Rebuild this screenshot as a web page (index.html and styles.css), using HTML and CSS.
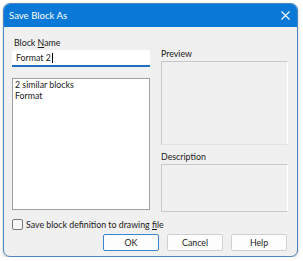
FILE: index.html
```html
<!DOCTYPE html>
<html>
<head>
<meta charset="utf-8">
<link rel="stylesheet" href="styles.css">
</head>
<body>
<div class="window">
  <div class="titlebar">
    <span class="title">Save Block As</span>
    <svg class="close" width="9" height="9" viewBox="0 0 9 9"><path d="M0.5 0.5L8.5 8.5M8.5 0.5L0.5 8.5" stroke="#fff" stroke-width="1.1" fill="none"/></svg>
  </div>
  <div class="content">
    <div class="columns">
      <div class="left">
        <div class="label">Block <u>N</u>ame</div>
        <div class="input">Format 2<span class="caret"></span></div>
        <div class="list">
          <div>2 similar blocks</div>
          <div>Format</div>
        </div>
      </div>
      <div class="right">
        <div class="label plain">Preview</div>
        <div class="box preview"></div>
        <div class="label plain desc-label">Description</div>
        <div class="box desc"></div>
      </div>
    </div>
    <div class="check-row">
      <span class="checkbox"></span>
      <span>Save block definition to drawing <u>f</u>ile</span>
    </div>
    <div class="buttons">
      <div class="btn default">OK</div>
      <div class="btn">Cancel</div>
      <div class="btn">Help</div>
    </div>
  </div>
</div>
</body>
</html>
```
FILE: styles.css
```css
html, body {
  margin: 0;
  padding: 0;
  background: #ffffff;
}
body {
  font-family: Lato, "Noto Sans", sans-serif;
  font-size: 8.8px;
  color: #1a1a1a;
}
.window {
  margin: 3px 0 0 3px;
  width: 293px;
  height: 252px;
  border: 1px solid #4f86c4;
  border-radius: 7px;
  background: #f0f0f0;
  overflow: hidden;
  display: flex;
  flex-direction: column;
  box-shadow: 0 1px 3px rgba(0,0,0,0.25);
}
.titlebar {
  height: 23px;
  background: #0a78d6;
  display: flex;
  align-items: center;
  justify-content: space-between;
  padding: 0 7px 0 5px;
  flex: none;
}
.title {
  color: #ffffff;
  font-size: 9.6px;
}
.close {
  display: block;
}
.content {
  flex: 1;
  padding: 10px 9px 0 8px;
  display: flex;
  flex-direction: column;
}
.columns {
  display: flex;
  gap: 11px;
}
.left {
  width: 138px;
  display: flex;
  flex-direction: column;
}
.right {
  flex: 1;
  display: flex;
  flex-direction: column;
  padding-top: 11px;
}
.label {
  height: 12px;
  line-height: 12px;
  padding-left: 2px;
  margin-bottom: 1px;
}
.label.plain {
  padding-left: 0;
}
.label u {
  text-decoration-thickness: 1px;
}
.input {
  height: 15px;
  background: #ffffff;
  border-bottom: 2px solid #1f6fbf;
  border-radius: 2px 2px 0 0;
  line-height: 15px;
  padding-left: 4px;
  display: flex;
  align-items: center;
}
.caret {
  display: inline-block;
  width: 1px;
  height: 10px;
  background: #000;
  margin-left: 1px;
}
.list {
  margin-top: 11px;
  height: 130px;
  background: #ffffff;
  border: 1px solid #a0a0a0;
  padding: 0 2px;
  line-height: 11px;
}
.box {
  border: 1px solid #d6d6d6;
  border-top-color: #c8c8c8;
  border-left-color: #c8c8c8;
  border-bottom-color: #e2e2e2;
  border-right-color: #ffffff;
  background: #f0f0f0;
}
.preview {
  height: 82px;
}
.desc-label {
  margin-top: 6px;
}
.desc {
  height: 46px;
  border-bottom-color: #c8c8c8;
}
.check-row {
  margin-top: 6px;
  height: 12px;
  display: flex;
  align-items: center;
  gap: 3px;
}
.checkbox {
  width: 9px;
  height: 9px;
  border: 1px solid #7a7a7a;
  border-radius: 2px;
  background: #f6f6f6;
}
.buttons {
  margin-top: 4px;
  display: flex;
  justify-content: flex-end;
  gap: 8px;
  padding-right: 1px;
}
.btn {
  width: 54px;
  height: 15px;
  line-height: 15px;
  text-align: center;
  background: #fdfdfd;
  border: 1px solid #d0d0d0;
  border-radius: 2px;
}
.btn.default {
  border-color: #3d84cf;
}
```
